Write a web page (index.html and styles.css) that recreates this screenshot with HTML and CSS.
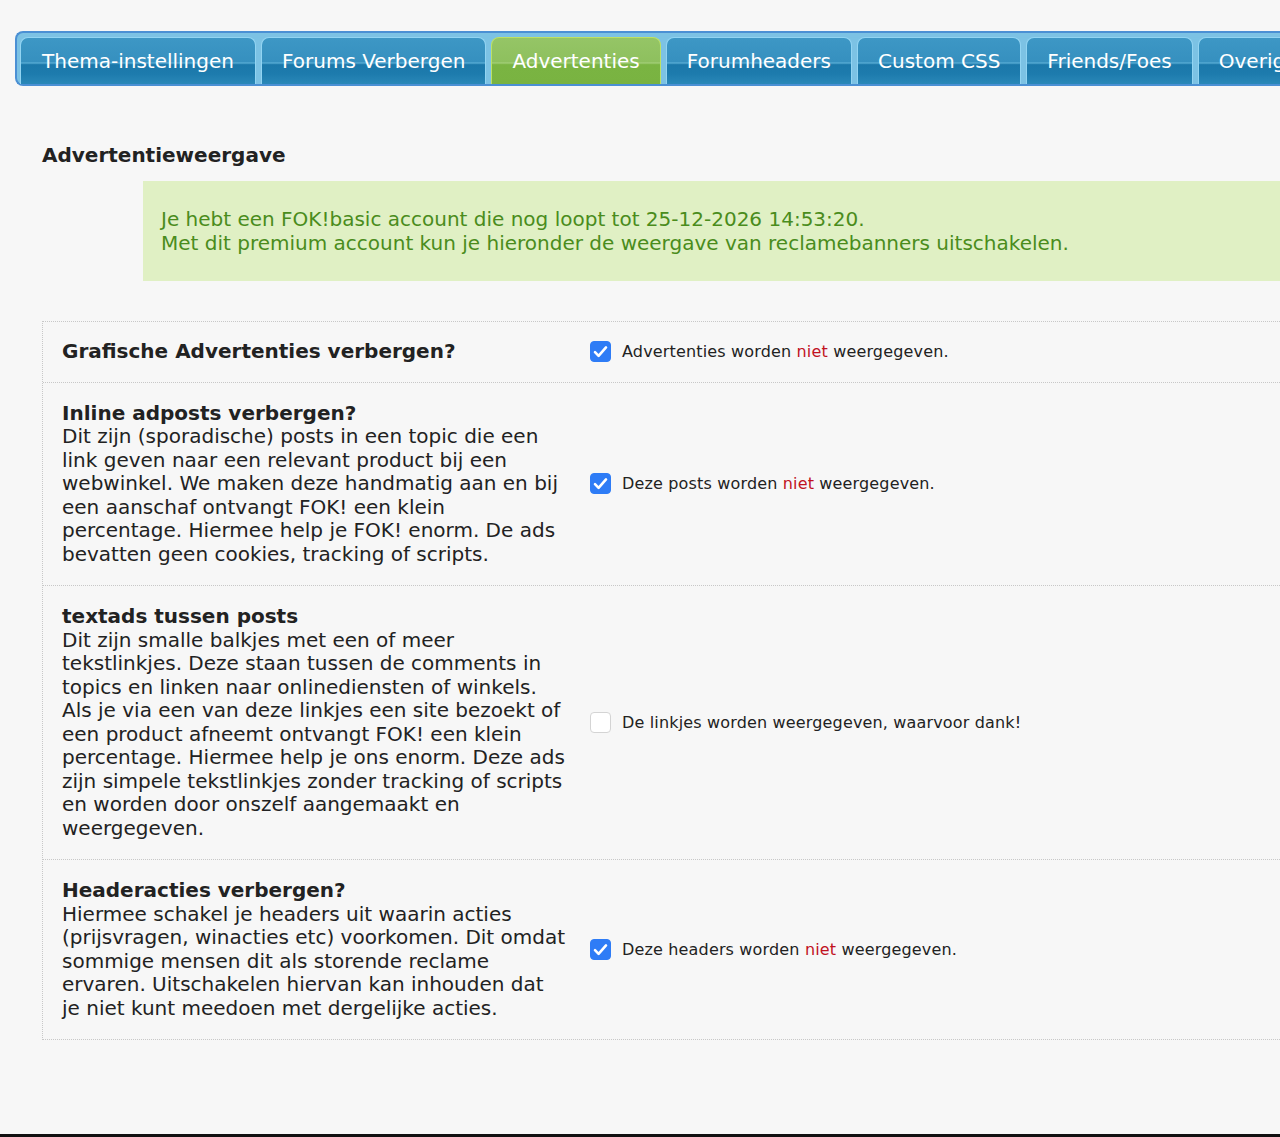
FILE: index.html
```html
<!DOCTYPE html>
<html lang="nl">
<head>
<meta charset="utf-8">
<title>Advertenties</title>
<link rel="stylesheet" href="styles.css">
</head>
<body>
<nav class="tabs">
  <a class="tab" href="#">Thema-instellingen</a>
  <a class="tab" href="#">Forums Verbergen</a>
  <a class="tab active" href="#">Advertenties</a>
  <a class="tab" href="#">Forumheaders</a>
  <a class="tab" href="#">Custom CSS</a>
  <a class="tab" href="#">Friends/Foes</a>
  <a class="tab" href="#">Overig</a>
</nav>

<main class="content">
  <h2 class="title">Advertentieweergave</h2>
  <div class="notice">
    Je hebt een FOK!basic account die nog loopt tot 25-12-2026 14:53:20.<br>
    Met dit premium account kun je hieronder de weergave van reclamebanners uitschakelen.
  </div>

  <div class="opts">
    <div class="opt">
      <div class="opt-desc">
        <strong>Grafische Advertenties verbergen?</strong>
      </div>
      <label class="opt-ctrl">
        <input type="checkbox" class="check" checked>
        <span>Advertenties worden <em class="neg">niet</em> weergegeven.</span>
      </label>
    </div>
    <div class="opt">
      <div class="opt-desc">
        <strong>Inline adposts verbergen?</strong>
        Dit zijn (sporadische) posts in een topic die een link geven naar een relevant product bij een webwinkel. We maken deze handmatig aan en bij een aanschaf ontvangt FOK! een klein percentage. Hiermee help je FOK! enorm. De ads bevatten geen cookies, tracking of scripts.
      </div>
      <label class="opt-ctrl">
        <input type="checkbox" class="check" checked>
        <span>Deze posts worden <em class="neg">niet</em> weergegeven.</span>
      </label>
    </div>
    <div class="opt">
      <div class="opt-desc">
        <strong>textads tussen posts</strong>
        Dit zijn smalle balkjes met een of meer tekstlinkjes. Deze staan tussen de comments in topics en linken naar onlinediensten of winkels. Als je via een van deze linkjes een site bezoekt of een product afneemt ontvangt FOK! een klein percentage. Hiermee help je ons enorm. Deze ads zijn simpele tekstlinkjes zonder tracking of scripts en worden door onszelf aangemaakt en weergegeven.
      </div>
      <label class="opt-ctrl">
        <input type="checkbox" class="check">
        <span>De linkjes worden weergegeven, waarvoor dank!</span>
      </label>
    </div>
    <div class="opt">
      <div class="opt-desc">
        <strong>Headeracties verbergen?</strong>
        Hiermee schakel je headers uit waarin acties (prijsvragen, winacties etc) voorkomen. Dit omdat sommige mensen dit als storende reclame ervaren. Uitschakelen hiervan kan inhouden dat je niet kunt meedoen met dergelijke acties.
      </div>
      <label class="opt-ctrl">
        <input type="checkbox" class="check" checked>
        <span>Deze headers worden <em class="neg">niet</em> weergegeven.</span>
      </label>
    </div>
  </div>
</main>

<footer class="footer"></footer>
</body>
</html>
```

FILE: styles.css
```css
html, body {
  margin: 0;
  padding: 0;
}

body {
  background: #f7f7f7;
  color: #222;
  font-family: "DejaVu Sans", Verdana, sans-serif;
  font-size: 20px;
  overflow: hidden;
}

/* tab strip */
.tabs {
  display: flex;
  gap: 5px;
  margin: 31px 0 0 15px;
  padding: 4px 0 0 3px;
  border: 2px solid #4b90d4;
  border-right: none;
  border-radius: 8px 0 0 8px;
  background: #7cc2e4;
  white-space: nowrap;
}

.tab {
  flex: none;
  display: block;
  height: 46px;
  line-height: 47px;
  padding: 0 20px;
  border: 1px solid #92d4f2;
  border-bottom: none;
  border-radius: 8px 8px 0 0;
  color: #fff;
  font-size: 20px;
  text-decoration: none;
  background: linear-gradient(#3d97c5 0%, #3690bf 52%, #5aaed6 54%, #1b78aa 58%, #1d7bad 78%, #2a88b8 100%);
}

.tab:first-child {
  padding: 0 21px;
}

.tab.active {
  padding: 0 20px;
  border-color: #bde064;
  background: linear-gradient(#95c566 0%, #8ec05e 52%, #a3cf78 54%, #7ab442 58%, #79b341 100%);
}

/* main section */
.content {
  padding-left: 42px;
}

.title {
  margin: 58px 0 14px;
  font-size: 20px;
  font-weight: bold;
  line-height: 23px;
}

.notice {
  margin-left: 101px;
  padding: 26px 18px 26px 18px;
  background: #e0f0c4;
  color: #4a8c1c;
  line-height: 24px;
  white-space: nowrap;
}

/* settings list */
.opts {
  margin-top: 40px;
  border-top: 1px dotted #c8c8c8;
  border-left: 1px dotted #c8c8c8;
}

.opt {
  display: grid;
  grid-template-columns: 543px 1fr;
  border-bottom: 1px dotted #c8c8c8;
}

.opt-desc {
  padding: 19px 20px 19px 19px;
  line-height: 23.5px;
}

.opt:first-child .opt-desc {
  padding-top: 18px;
  padding-bottom: 18px;
}

.opt-desc strong {
  display: block;
}

.opt-ctrl {
  display: flex;
  align-items: center;
  font-size: 16px;
  letter-spacing: 0.16px;
  white-space: nowrap;
}

.check {
  appearance: none;
  -webkit-appearance: none;
  flex: none;
  width: 21px;
  height: 21px;
  margin: 0 11px 0 4px;
  border: 1px solid #d4d4d4;
  border-radius: 4px;
  background: #fff;
}

.check:checked {
  border-color: #2e7cf6;
  background: #2e7cf6 url("data:image/svg+xml,%3Csvg xmlns='http://www.w3.org/2000/svg' viewBox='0 0 21 21'%3E%3Cpath d='M5 11.2l3.6 3.6L16 6.4' fill='none' stroke='%23fff' stroke-width='2.6' stroke-linecap='round' stroke-linejoin='round'/%3E%3C/svg%3E") center / 21px 21px no-repeat;
}

.neg {
  font-style: normal;
  color: #c1121f;
}

.footer {
  margin-top: 94px;
  height: 40px;
  background: #111;
}
```
